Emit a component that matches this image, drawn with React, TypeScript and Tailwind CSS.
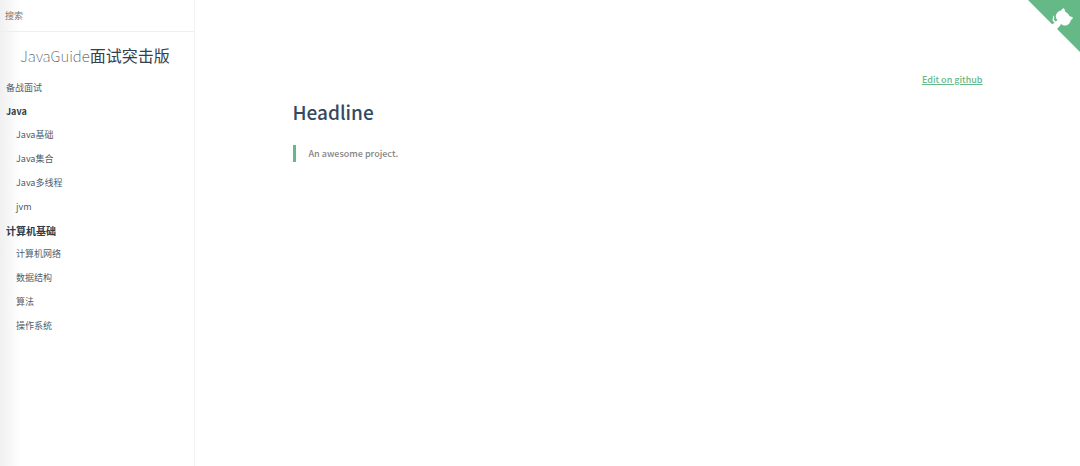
type Section = { title?: string; items: string[] };

const sections: Section[] = [
  { items: ['备战面试'] },
  { title: 'Java', items: ['Java基础', 'Java集合', 'Java多线程', 'jvm'] },
  { title: '计算机基础', items: ['计算机网络', '数据结构', '算法', '操作系统'] },
];

const isLatin = (text: string) => /^[\x20-\x7e]+$/.test(text);

function GithubCorner() {
  return (
    <a href="#github" aria-label="View source on Github" className="absolute top-0 right-0">
      <svg viewBox="0 0 250 250" className="block size-13 fill-[#65b987]" aria-hidden="true">
        <path d="M0,0 L115,115 L130,115 L142,142 L250,250 L250,0 Z" />
        <path
          className="fill-white"
          d="M128.3,109.0 C113.8,99.7 119.0,89.6 119.0,89.6 C122.0,82.7 120.5,78.6 120.5,78.6 C119.2,72.0 123.4,76.3 123.4,76.3 C127.3,80.9 125.5,87.3 125.5,87.3 C122.9,97.6 130.6,101.9 134.4,103.2"
        />
        <path
          className="fill-white"
          d="M115.0,115.0 C114.9,115.1 118.7,116.5 119.8,115.4 L133.7,101.6 C136.9,99.2 139.9,98.4 142.2,98.6 C133.8,88.0 127.5,74.4 143.8,58.0 C148.5,53.4 154.0,51.2 159.7,51.0 C160.3,49.4 163.2,43.6 171.4,40.1 C171.4,40.1 176.1,42.5 178.8,56.2 C183.1,58.6 187.2,61.8 190.9,65.4 C194.5,69.0 197.7,73.2 200.1,77.6 C213.8,80.2 216.3,84.9 216.3,84.9 C212.7,93.1 206.9,96.0 205.4,96.6 C205.1,102.4 203.0,107.8 198.3,112.5 C181.9,128.9 168.3,122.5 157.7,114.1 C157.9,116.9 156.7,120.9 152.7,124.9 L141.0,136.5 C139.8,137.7 141.6,141.9 141.8,141.8 Z"
        />
      </svg>
    </a>
  );
}

function Sidebar() {
  return (
    <aside className="w-[195px] shrink-0 border-r border-[#f2f2f2] bg-linear-to-r from-[#f0f0f0] to-white to-[20px]">
      <div className="border-b border-[#eeeeee] px-[5px] py-[6px]">
        <input
          type="search"
          aria-label="搜索"
          placeholder="搜索"
          className="block h-[19px] w-full bg-transparent text-[9px] text-[#555555] outline-none placeholder:text-[#777777]"
        />
      </div>
      <h1 className="mt-[11px] pr-1 text-center text-[16px] leading-6 text-[#34404c]">
        <a href="#home">
          <span className="text-[15px] font-thin">JavaGuide</span>面试突击版
        </a>
      </h1>
      <nav className="mt-2 px-[6px] text-[9px] text-[#505d6b]">
        {sections.map((section) => (
          <div key={section.items[0]}>
            {section.title && (
              <p
                className={`leading-[23px] font-bold text-[#2f3b47] ${
                  isLatin(section.title) ? 'text-[9px]' : 'text-[10px]'
                }`}
              >
                {section.title}
              </p>
            )}
            <ul className={section.title ? 'pl-[10px]' : ''}>
              {section.items.map((item) => (
                <li key={item} className="leading-6">
                  <a href={`#${item}`} className="block">{item}</a>
                </li>
              ))}
            </ul>
          </div>
        ))}
      </nav>
    </aside>
  );
}

export default function App() {
  return (
    <div className="relative flex min-h-screen bg-white font-['Noto_Sans_CJK_SC',sans-serif]">
      <Sidebar />
      <main className="min-w-0 flex-1">
        <article className="mx-auto w-4/5 px-[9px] pt-[72px]">
          <p className="text-right text-[9px] leading-4 font-medium">
            <a href="#edit" className="text-[#65b987] underline">Edit on github</a>
          </p>
          <h2 className="mt-2 text-[19px] leading-8 font-medium text-[#34495e]">Headline</h2>
          <blockquote className="mt-[17px] border-l-3 border-[#65b987] pl-[13px] text-[9px] leading-[17px] font-medium text-[#858585]">
            An awesome project.
          </blockquote>
        </article>
      </main>
      <GithubCorner />
    </div>
  );
}
